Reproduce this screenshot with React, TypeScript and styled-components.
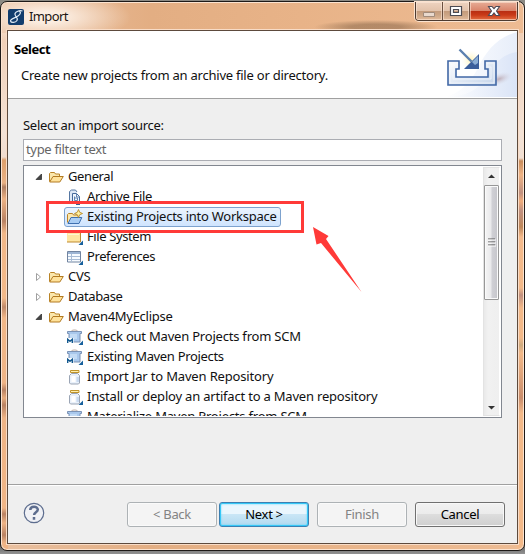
import React from "react";
import styled, { createGlobalStyle, css } from "styled-components";

const Global = createGlobalStyle`
  * { box-sizing: border-box; }
  html, body { margin: 0; height: 554px; overflow: hidden; }
  body { background: #777; font: 13px/20px "Noto Sans", "Open Sans", sans-serif; color: #111; }
`;

const Desktop = styled.div`
  width: 525px;
  height: 554px;
  padding-top: 1px;
  background: linear-gradient(#8c8a84 0 10px, #33261e 10px 540px, #6e6e6e 547px, #929292 554px);
`;

const Frame = styled.div`
  width: 525px;
  height: 550px;
  border: 1px solid #1e1a18;
  border-radius: 7px;
  padding: 0 6px 6px;
  box-shadow: inset 0 0 0 1px #fbe3d0;
  background:
    radial-gradient(ellipse 85px 26px at 45px 15px, rgba(255, 246, 238, 0.85) 20%, transparent),
    radial-gradient(ellipse 62px 7px at 375px 25px, rgba(115, 85, 60, 0.45) 40%, transparent),
    linear-gradient(#f0cfb6 0, #f3e2d6 100px, #f1ddd0 124px, #dfa06c 127px, #e9b184 150px, #b07f62 154px, #edb284 166px, #b98263 188px, #f1b788 200px, #f3b989 265px, #c08a6a 274px, #f1b788 285px, #efb486 350px, #b98263 357px, #e8ad7e 365px, #b98263 372px, #efb486 385px, #f0b586 475px, #b98263 481px, #efb486 490px, #b98263 502px, #efb486 510px) 0 31px / 7px 520px no-repeat,
    linear-gradient(#f0cfb6 0, #f3e2d6 100px, #f1e0d4 125px, #c98d5c 128px, #efb486 142px, #c09080 160px, #f0ad7c 168px, #c09080 178px, #be875a 194px, #f4ba8c 204px, #f3b989 255px, #c09080 262px, #f3b989 275px, #f3b989 305px, #ceab80 312px, #f3b989 320px, #c98d6c 365px, #f3b989 380px) 100% 31px / 7px 520px no-repeat,
    linear-gradient(90deg, #e9c0a0, #e3ae83 150px, #e8b388 300px, #edbb93);
`;

const TitleBar = styled.header`
  display: flex;
  align-items: flex-start;
  height: 28px;
  padding-left: 1px;
`;
const AppIcon = styled.svg`
  margin-top: 7px;
  flex: none;
`;
const Title = styled.div`
  flex: 1;
  padding: 4px 0 0 5px;
  color: #1c1612;
  letter-spacing: -0.6px;
`;

const WindowButtons = styled.div`
  display: flex;
  width: 103px;
  height: 19px;
  border: 1px solid #4d3b30;
  border-top: 0;
  border-radius: 0 0 4px 4px;
  overflow: hidden;
  box-shadow: 0 0 0 1px #fbe3d0;
`;
const WindowButton = styled.div<{ $kind: "min" | "max" | "close" }>`
  display: grid;
  place-items: center;
  flex: ${(p) => (p.$kind === "close" ? "0 0 47px" : "1")};
  border-right: ${(p) => (p.$kind === "close" ? "0" : "1px solid #6b5040")};
  box-shadow: inset 0 0 0 1px rgba(255, 235, 220, 0.55);
  background: ${(p) =>
    p.$kind === "close"
      ? "linear-gradient(#e6ac95 0, #d9836a 9px, #b82d12 9px, #c93a18 13px, #e9784a 19px)"
      : "linear-gradient(#eed3c0 0, #e2c2aa 9px, #c39a7b 9px, #cca585 13px, #e6bf9f 19px)"};
`;

const Client = styled.main`
  display: flex;
  flex-direction: column;
  height: 514px;
  border: 1px solid #5d4a3d;
  background: #efefef;
  outline: 1px solid #f8dcc7;
`;

const Banner = styled.section`
  display: flex;
  justify-content: space-between;
  height: 68px;
  flex: none;
  background: #fff;
  border-bottom: 1px solid #a0a0a0;
`;
const BannerText = styled.div`
  padding: 8px 0 0 6px;
`;
const BannerTitle = styled.h1`
  margin: 0;
  font: 700 13px/20px "Noto Sans", "Open Sans", sans-serif;
  letter-spacing: -0.45px;
  color: #000;
`;
const BannerNote = styled.p`
  margin: 6px 0 0 7px;
  line-height: 20px;
  letter-spacing: -0.23px;
`;

const Body = styled.section`
  display: flex;
  flex-direction: column;
  flex: 1;
  padding: 16px 15px 0;
`;
const FieldLabel = styled.label`
  height: 24px;
  letter-spacing: -0.27px;
`;
const Filter = styled.div`
  height: 22px;
  padding-left: 2px;
  border: 1px solid #abadb3;
  background: #fff;
  color: #666;
  line-height: 19px;
  letter-spacing: -0.33px;
`;
const TreeBox = styled.div`
  display: flex;
  height: 253px;
  margin-top: 4px;
  padding: 1px;
  border: 1px solid #828790;
  background: #fff;
  overflow: hidden;
`;
const Rows = styled.div`
  flex: 1;
  height: 249px;
  overflow: hidden;
`;
const Row = styled.div<{ $child?: boolean }>`
  display: flex;
  align-items: center;
  height: 20px;
  padding-left: ${(p) => (p.$child ? 39 : 9)}px;
  white-space: nowrap;
`;
const Item = styled.div<{ $selected?: boolean }>`
  display: flex;
  align-items: center;
  gap: 4px;
  height: 20px;
  padding: 0 3px 0 2px;
  border: 1px solid transparent;
  border-radius: 3px;
  ${(p) =>
    p.$selected &&
    css`
      border-color: #7da2ce;
      background: linear-gradient(#ebf4fe, #cfe4fe);
    `}
`;
const ItemText = styled.span<{ $track: number }>`
  height: 18px;
  line-height: 16px;
  letter-spacing: ${(p) => p.$track}px;
`;
const Twisty = styled.svg`
  margin-right: 2px;
`;

const ScrollBar = styled.div`
  display: flex;
  flex-direction: column;
  align-items: center;
  width: 17px;
  height: 249px;
  border: 1px solid #e3e3e3;
  border-right-color: #fff;
  background: linear-gradient(90deg, #e9e9e9, #f1f1f1 4px, #efefef);
`;
const ScrollArrow = styled.svg`
  flex: none;
`;
const Thumb = styled.div`
  display: grid;
  place-items: center;
  flex: none;
  width: 15px;
  height: 115px;
  border: 1px solid #979797;
  border-radius: 1px;
  box-shadow: inset 0 0 0 1px #fafafa;
  background: linear-gradient(90deg, #f5f5f5, #e9e9eb 6px, #d0d0d5 7px, #c7c7cc 12px);
`;
const Track = styled.div`
  flex: 1;
`;

const Footer = styled.footer`
  display: flex;
  align-items: flex-start;
  height: 59px;
  flex: none;
  padding: 17px 12px 0 15px;
  border-top: 1px solid #a0a0a0;
  box-shadow: inset 0 1px #fff;
`;
const Help = styled.svg`
  margin-right: 82px;
  flex: none;
`;
const Button = styled.button<{ $look: "disabled" | "primary" | "plain"; $gap: number }>`
  width: 90px;
  height: 25px;
  flex: none;
  margin: 0 0 0 ${(p) => p.$gap}px;
  padding: 0 0 1px;
  border-radius: 3px;
  font: 13px/20px "Noto Sans", "Open Sans", sans-serif;
  letter-spacing: -0.3px;
  ${(p) =>
    p.$look === "disabled" &&
    css`
      color: #838383;
      border: 1px solid #adb2b5;
      background: #f4f4f4;
      box-shadow: inset 0 0 0 1px #fafafa;
    `}
  ${(p) =>
    p.$look === "primary" &&
    css`
      color: #000;
      border: 1px solid #3c7fb1;
      background: linear-gradient(#eaf6fd 0 48%, #c9e6f6 50%, #b1d9ef);
      box-shadow: inset 0 0 0 1px #36c8f7, inset 0 0 2px 1px #61d6f9;
    `}
  ${(p) =>
    p.$look === "plain" &&
    css`
      color: #000;
      border: 1px solid #707070;
      background: linear-gradient(#f2f2f2, #ebebeb 49%, #dddddd 50%, #cfcfcf);
      box-shadow: inset 0 0 0 1px #f8f8f8;
    `}
`;

const Annotation = styled.svg`
  position: absolute;
  left: 0;
  top: 0;
  pointer-events: none;
`;

type IconName = "folder" | "archive" | "project" | "files" | "prefs" | "maven" | "jar" | "jarLink";

const Corner = () => <path d="M16 11.500V16h-4.500z" fill="#17609c" />;
const Icon = ({ name }: { name: IconName }) => (
  <svg width="16" height="16" viewBox="0 0 16 16">
    {name === "folder" && (
      <>
        <path d="M1.500 12.500v-8l1-1h4l1 1.500h4v3" fill="#fbe7ac" stroke="#b98326" />
        <path d="M1.700 13 5 7.500h10.300L11.800 13z" fill="#ffe29a" stroke="#b27a22" />
      </>
    )}
    {name === "archive" && (
      <>
        <path d="M4.500 12.500h-2v-10l2-1.500h4l1.500 2" fill="#dbe7f6" stroke="#5677a2" />
        <path d="M5.500 4.500h4l3 3v6h-7z" fill="#eef5fd" stroke="#44699b" />
        <path d="M7.500 7.500v4h3V9h-3M9.500 5v3h3" stroke="#5f83b2" fill="none" />
        <path d="M3 13h3v2H3zM9 14h4v2H9z" fill="#355f92" />
      </>
    )}
    {name === "project" && (
      <>
        <path d="M.500 13.500v-8l1-1h4l1 1.500h5v3" fill="#fbe7ac" stroke="#b98326" />
        <path d="M1 14.500 4 8.500h10.800L12 14.500z" fill="#a9cdf4" stroke="#3e70b0" />
        <path d="m11.500 .500 1.200 2.800 2.800 1.200-2.800 1.200-1.200 2.800-1.200-2.800-2.800-1.200 2.800-1.200z" fill="#fff1a3" stroke="#b98a24" strokeWidth=".9" />
      </>
    )}
    {name === "files" && (
      <>
        <path d="M-.5 3.500h7l1-1h5l1 1v9.500h-14z" fill="#ffe6a2" stroke="#bd8a31" />
        <path d="M1 5.500h11" stroke="#fff6d3" />
        <Corner />
      </>
    )}
    {name === "prefs" && (
      <>
        <path d="M.500 2.500h13v10.500H.500z" fill="#f7fbff" stroke="#7184a0" />
        <path d="M1 3h12v2H1z" fill="#9db5d4" />
        <path d="M1 7.500h12M1 10.500h12M4.500 5v7.500" stroke="#a9bdd6" />
        <Corner />
      </>
    )}
    {name === "maven" && (
      <>
        <path d="M4 2.500c1-2 6-2 7 0" fill="none" stroke="#b9a69a" />
        <path d="M.500 2.500h14v2h-1.500v8.500H2V4.500H.500z" fill="#a9c8ec" stroke="#7b93b6" />
        <path d="M3 5h7v5H3z" fill="#c3dbf5" />
        <path d="M0 9h6.500v6H0z" fill="#fff" />
        <path d="M.700 14v-3.800L3 12.200l2.300-2V14" fill="none" stroke="#14598f" strokeWidth="1.400" />
        <Corner />
      </>
    )}
    {(name === "jar" || name === "jarLink") && (
      <>
        <path d="M4.500 4.500h6l2 2v7.500l-1 1h-8l-1-1V6.500z" fill="#e9f1fb" stroke="#9ba5b5" />
        <path d="M4.500 7h4v6h-4z" fill="#fff" />
        <path d="M9.500 8H12v5H9.500z" fill="#c9daf0" />
        <path d="M3.500 1.500h8.500v2H3.500z" fill="#fff0ae" stroke="#c0942b" />
        {name === "jarLink" && <Corner />}
      </>
    )}
  </svg>
);

interface Node {
  text: string;
  icon: IconName;
  track: number;
  open?: boolean;
  closed?: boolean;
  selected?: boolean;
}

const tree: Node[] = [
  { text: "General", icon: "folder", open: true, track: -0.4 },
  { text: "Archive File", icon: "archive", track: -0.35 },
  { text: "Existing Projects into Workspace", icon: "project", selected: true, track: -0.25 },
  { text: "File System", icon: "files", track: -0.4 },
  { text: "Preferences", icon: "prefs", track: -0.4 },
  { text: "CVS", icon: "folder", closed: true, track: -0.3 },
  { text: "Database", icon: "folder", closed: true, track: -0.4 },
  { text: "Maven4MyEclipse", icon: "folder", open: true, track: -0.28 },
  { text: "Check out Maven Projects from SCM", icon: "maven", track: -0.21 },
  { text: "Existing Maven Projects", icon: "maven", track: -0.33 },
  { text: "Import Jar to Maven Repository", icon: "jar", track: -0.16 },
  { text: "Install or deploy an artifact to a Maven repository", icon: "jarLink", track: -0.2 },
  { text: "Materialize Maven Projects from SCM", icon: "maven", track: -0.21 },
];

const ImportBanner = () => (
  <svg width="72" height="67" viewBox="445 31 72 67">
    <defs>
      <linearGradient id="sky" x1="0" x2="1">
        <stop offset="0" stopColor="#fff" />
        <stop offset="1" stopColor="#dae4f7" />
      </linearGradient>
      <linearGradient id="tray" x1="0" x2="1" y2="1">
        <stop offset="0" stopColor="#fff" />
        <stop offset="1" stopColor="#c4d4ea" />
      </linearGradient>
      <radialGradient id="shade">
        <stop offset="0" stopColor="#bfaeb8" />
        <stop offset="1" stopColor="#d8ddec" stopOpacity="0" />
      </radialGradient>
      <radialGradient id="glow">
        <stop offset="0" stopColor="#fff3b8" />
        <stop offset="1" stopColor="#fffbe8" stopOpacity="0" />
      </radialGradient>
    </defs>
    <path d="M517 32c-19 5-31 19-39 36-8 15-18 25-33 29h72z" fill="url(#sky)" opacity=".65" />
    <path d="M517 52c-23 4-25 21-38 34-8 7-19 11-34 11h72z" fill="url(#sky)" />
    <ellipse cx="499" cy="79" rx="14" ry="6" fill="url(#shade)" transform="rotate(-18 499 79)" />
    <circle cx="471" cy="60" r="10" fill="url(#glow)" />
    <path d="M448 61h11v8h-3v8h32v-8h-3v-8h11v24h-48z" fill="url(#tray)" stroke="#4268a6" strokeWidth="1.600" />
    <path d="M450 63h6v4h-3v12h38V67h-4v-4h7v20h-44z" fill="none" stroke="#f2f6fc" opacity=".8" />
    <path d="m459.500 49.500 12 12" stroke="#5c80af" strokeWidth="2.400" />
    <path d="M479 54v15h-15z" fill="#3b5e9b" />
    <path d="m478 56-6 6 3 3 3-2z" fill="#8badd4" />
  </svg>
);

export default function App() {
  return (
    <Desktop>
      <Global />
      <Frame>
        <TitleBar>
          <AppIcon width="16" height="16" viewBox="0 0 16 16">
            <rect width="16" height="16" rx="2" fill="#123d6d" />
            <path d="M14.500 2C11 1 6.500 3 7 5.500S10.500 9 9 11.500 3 14 2.500 12 7 9 10 7s3-4.500 1-4.500" fill="none" stroke="#e1ebf5" strokeWidth="1.200" />
          </AppIcon>
          <Title>Import</Title>
          <WindowButtons>
            <WindowButton $kind="min">
              <svg width="14" height="13"><path d="M1.500 7.500h11v4h-11z" fill="#e9d9cd" stroke="#a18b7b" /></svg>
            </WindowButton>
            <WindowButton $kind="max">
              <svg width="14" height="12"><path d="M1.500 1.500h11v9h-11zM4.500 4.500v3h5v-3z" fill="#fff" fillRule="evenodd" stroke="#4c4b52" strokeWidth="1.200" /></svg>
            </WindowButton>
            <WindowButton $kind="close">
              <svg width="14" height="12"><path d="M1.500 1.500h3.500l2 2.200 2-2.200h3.500L9.500 6l3 4.500H9L7 8l-2 2.500H1.500l3-4.500z" fill="#fff" stroke="#4c4b58" strokeWidth="1.100" /></svg>
            </WindowButton>
          </WindowButtons>
        </TitleBar>
        <Client>
          <Banner>
            <BannerText>
              <BannerTitle>Select</BannerTitle>
              <BannerNote>Create new projects from an archive file or directory.</BannerNote>
            </BannerText>
            <ImportBanner />
          </Banner>
          <Body>
            <FieldLabel>Select an import source:</FieldLabel>
            <Filter>type filter text</Filter>
            <TreeBox>
              <Rows>
                {tree.map((n) => {
                  const parent = n.open || n.closed;
                  return (
                    <Row key={n.text} $child={!parent}>
                      {parent && (
                        <Twisty width="9" height="10">
                          {n.open ? (
                            <path d="M7.500 2v5.500H2z" fill="#444" stroke="#222" strokeWidth=".7" />
                          ) : (
                            <path d="M2.500 1.500v7l4-3.500z" fill="#fff" stroke="#a0a0a0" />
                          )}
                        </Twisty>
                      )}
                      <Item $selected={n.selected}>
                        <Icon name={n.icon} />
                        <ItemText $track={n.track}>{n.text}</ItemText>
                      </Item>
                    </Row>
                  );
                })}
              </Rows>
              <ScrollBar>
                <ScrollArrow width="15" height="17"><path d="M4 10l3.500-3.500L11 10z" fill="#333" /></ScrollArrow>
                <Thumb>
                  <svg width="8" height="9"><path d="M0 1h7M0 4h7M0 7h7" stroke="#555" /><path d="M0 2h8M0 5h8M0 8h8" stroke="#fff" /></svg>
                </Thumb>
                <Track />
                <ScrollArrow width="15" height="17"><path d="M4 8l3.500 3.500L11 8z" fill="#333" /></ScrollArrow>
              </ScrollBar>
            </TreeBox>
          </Body>
          <Footer>
            <Help width="22" height="22" viewBox="0 0 22 22">
              <circle cx="11" cy="11" r="9.700" fill="#f0f1f5" stroke="#5d6d8e" strokeWidth="1.200" />
              <path d="M7.300 8c0-4.500 7.500-4.200 7.500-.4 0 2.700-3.700 2.600-3.700 5.400M11 15v2.700" fill="none" stroke="#5d6d8e" strokeWidth="2.500" />
            </Help>
            <Button $look="disabled" $gap={0}>&lt; Back</Button>
            <Button $look="primary" $gap={2}>Next &gt;</Button>
            <Button $look="disabled" $gap={8}>Finish</Button>
            <Button $look="plain" $gap={8}>Cancel</Button>
          </Footer>
        </Client>
      </Frame>
      <Annotation width="525" height="554">
        <path d="M47.500 202.500h255v29h-255z" fill="none" stroke="#ff3a38" strokeWidth="3" />
        <path d="M313 227l15.500 9-2.500 3 35.500 53L321 243l-4.500 1.500z" fill="#ff3a38" />
      </Annotation>
    </Desktop>
  );
}
